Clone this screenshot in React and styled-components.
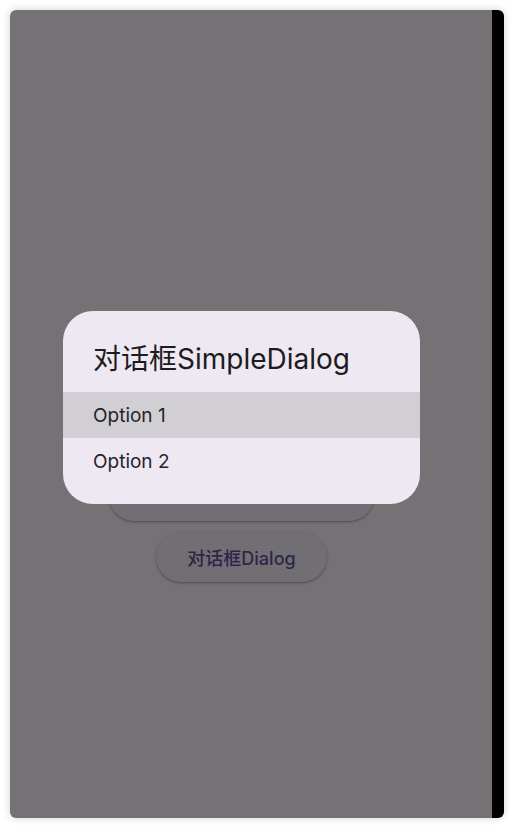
import React from "react";
import styled, { createGlobalStyle } from "styled-components";

const Global = createGlobalStyle`
  html, body { margin: 0; padding: 0; background: #ffffff; }
  body { font-family: "Inter", "Noto Sans CJK SC", sans-serif; }
  * { box-sizing: border-box; }
`;

const Page = styled.div`
  width: 514px;
  height: 828px;
  padding: 10px;
`;

const Frame = styled.div`
  width: 494px;
  height: 808px;
  display: flex;
  border-radius: 6px;
  overflow: hidden;
  box-shadow: 0 0 8px rgba(0, 0, 0, 0.18);
`;

const Screen = styled.div`
  position: relative;
  flex: 1;
  background: #fef7ff;
`;

const SideBar = styled.div`
  width: 12px;
  background: #000;
`;

const ButtonColumn = styled.div`
  display: flex;
  flex-direction: column;
  align-items: center;
  gap: 11px;
  padding: 449px 19px 0 0;
`;

const ElevatedButton = styled.button`
  height: ${(p) => p.$height || 50}px;
  padding: 0 31px;
  border: none;
  border-radius: 25px;
  background: #f7f2fa;
  color: #6750a4;
  font-family: "Inter", "Noto Sans CJK SC", sans-serif;
  font-size: 18px;
  font-weight: 500;
  box-shadow: 0 1px 3px rgba(0, 0, 0, 0.25), 0 1px 1px rgba(0, 0, 0, 0.12);
  white-space: nowrap;
`;

const Barrier = styled.div`
  position: absolute;
  inset: 0;
  background: rgba(0, 0, 0, 0.54);
  display: flex;
  align-items: center;
  justify-content: center;
  padding: 0 19px 13px 0;
`;

const Dialog = styled.div`
  width: 357px;
  background: #eee8f3;
  border-radius: 30px;
  padding: 30px 0 20px;
  display: flex;
  flex-direction: column;
`;

const Title = styled.div`
  padding: 0 30px;
  height: 36px;
  line-height: 36px;
  font-size: 28px;
  color: #1d1b20;
  margin-bottom: 15px;
  white-space: nowrap;
`;

const Option = styled.div`
  height: 46px;
  display: flex;
  align-items: center;
  padding: 0 30px;
  font-size: 19px;
  color: #25232a;
  background: ${(p) => (p.$active ? "#d1cfd3" : "transparent")};
`;

export default function App() {
  return (
    <>
      <Global />
      <Page>
        <Frame>
          <Screen>
            <ButtonColumn>
              <ElevatedButton $height={62}>简单对话框SimpleDialog</ElevatedButton>
              <ElevatedButton>对话框Dialog</ElevatedButton>
            </ButtonColumn>
            <Barrier>
              <Dialog>
                <Title>对话框SimpleDialog</Title>
                <Option $active>Option 1</Option>
                <Option>Option 2</Option>
              </Dialog>
            </Barrier>
          </Screen>
          <SideBar />
        </Frame>
      </Page>
    </>
  );
}
